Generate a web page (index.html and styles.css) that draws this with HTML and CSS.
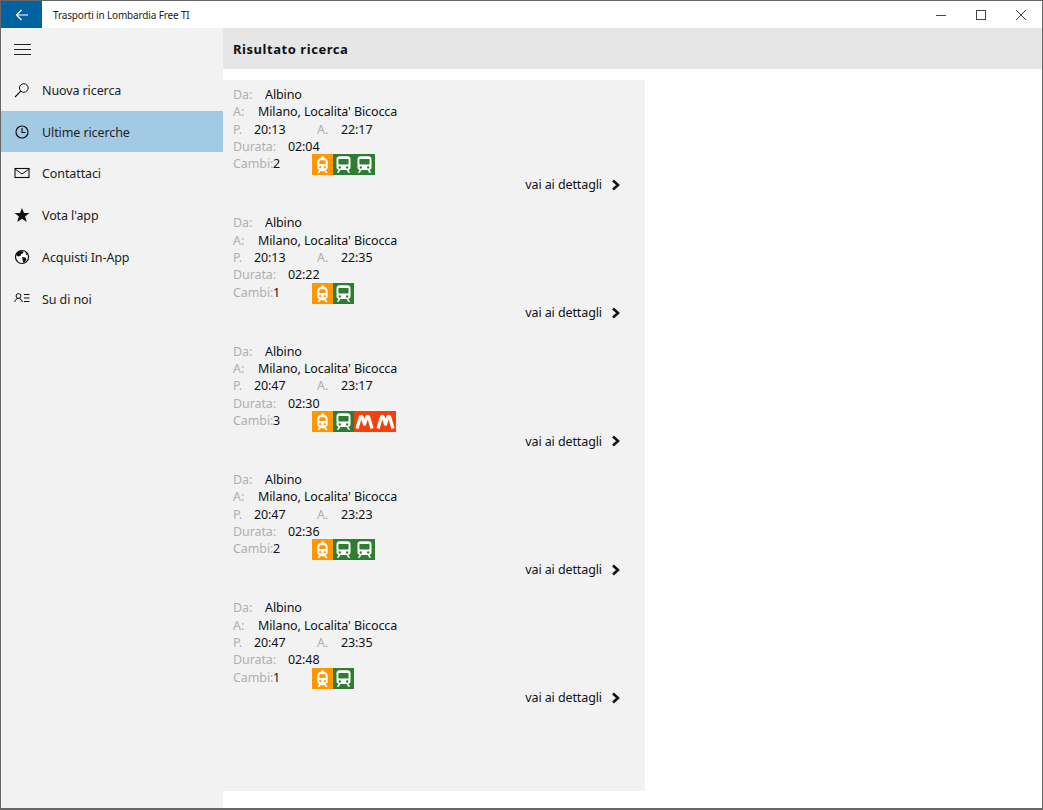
FILE: index.html
```html
<!DOCTYPE html>
<html lang="it">
<head>
<meta charset="utf-8">
<title>Trasporti in Lombardia Free TI</title>
<link rel="stylesheet" href="styles.css">
</head>
<body>
<svg class="defs" width="0" height="0" aria-hidden="true">
  <symbol id="train-a" viewBox="0 0 21 21">
    <path fill="#fff" fill-rule="evenodd" d="M9 2.500h3v1.300c2.200.4 3.700 2 3.700 4.200v5.200c0 1.400-.8 2.400-2 2.700l1.900 3.100h-1.900l-1-1.700H8.300l-1 1.700H5.400l1.900-3.100c-1.200-.3-2-1.300-2-2.700V8c0-2.200 1.500-3.800 3.700-4.200zM8.200 6.200c-.6.400-.9 1-.9 1.800v1.400c0 .4.200.6.600.6h5.200c.4 0 .6-.2.600-.6V8c0-.8-.3-1.400-.9-1.800zM8.200 12a1.100 1.100 0 1 0 0 2.200 1.100 1.100 0 0 0 0-2.200zm4.600 0a1.100 1.100 0 1 0 0 2.200 1.100 1.100 0 0 0 0-2.200z"/>
  </symbol>
  <symbol id="train-b" viewBox="0 0 21 21">
    <path fill="#fff" fill-rule="evenodd" d="M6.500 2.300h8c1.900 0 3 1.100 3 2.900v8.300c0 1.300-.8 2.200-2.100 2.400l1.900 2.800h-2l-1.700-2.600H7.400l-1.700 2.600h-2l1.900-2.800c-1.300-.2-2.100-1.100-2.100-2.400V5.200c0-1.800 1.100-2.900 3-2.900zM6.400 5c-.7 0-1 .3-1 1v3.600c0 .7.300 1 1 1h8.200c.7 0 1-.3 1-1V6c0-.7-.3-1-1-1zM6.800 12.200a1.200 1.200 0 1 0 0 2.400 1.200 1.200 0 0 0 0-2.400zm7.400 0a1.200 1.200 0 1 0 0 2.400 1.200 1.200 0 0 0 0-2.400z"/>
  </symbol>
  <symbol id="metro" viewBox="0 0 21 21">
    <path fill="none" stroke="#fff" stroke-width="3.200" stroke-linejoin="round" d="M3 17.500 6.300 6.200c.3-1 1.700-1 2 0l2.200 7 2.200-7c.3-1 1.700-1 2 0L18 17.500"/>
  </symbol>
</svg>
<div class="window">
  <header class="titlebar">
    <div class="back">
      <svg width="16" height="16" viewBox="0 0 16 16"><path d="M14 8H3M7.500 3 2.500 8l5 5" fill="none" stroke="#fff" stroke-width="1.200"/></svg>
    </div>
    <div class="apptitle">Trasporti in Lombardia Free TI</div>
    <div class="winbtns">
      <svg width="12" height="12" viewBox="0 0 12 12"><path d="M1 6.500h10" stroke="#444" stroke-width="1" fill="none"/></svg>
      <svg width="12" height="12" viewBox="0 0 12 12"><rect x="1.500" y="1.500" width="9" height="9" stroke="#444" stroke-width="1" fill="none"/></svg>
      <svg width="12" height="12" viewBox="0 0 12 12"><path d="M1 1l10 10M11 1 1 11" stroke="#444" stroke-width="1" fill="none"/></svg>
    </div>
  </header>
  <div class="body">
    <nav class="sidebar">
      <div class="burger"><span></span><span></span><span></span></div>
      <a class="navitem">
        <svg class="navicon" viewBox="0 0 16 16"><circle cx="9.800" cy="6" r="4.300" fill="none" stroke="#111" stroke-width="1"/><path d="M6.800 9.200 1 15" stroke="#111" stroke-width="1.100" fill="none"/></svg>
        <span class="navlabel">Nuova ricerca</span>
      </a>
      <a class="navitem active">
        <svg class="navicon" viewBox="0 0 16 16"><circle cx="8" cy="8" r="6" fill="none" stroke="#111" stroke-width="1.200"/><path d="M8 4v4.500h3.500" fill="none" stroke="#111" stroke-width="1.100"/></svg>
        <span class="navlabel">Ultime ricerche</span>
      </a>
      <a class="navitem">
        <svg class="navicon" viewBox="0 0 16 16"><rect x="1" y="3.500" width="14" height="9" fill="none" stroke="#111" stroke-width="1.100"/><path d="M1 4l7 5 7-5" fill="none" stroke="#111" stroke-width="1"/></svg>
        <span class="navlabel">Contattaci</span>
      </a>
      <a class="navitem">
        <svg class="navicon" viewBox="0 0 16 16"><path d="M8 1l2 5h5.500l-4.400 3.400 1.700 5.500L8 11.700l-4.800 3.200 1.700-5.500L.5 6H6z" fill="#111"/></svg>
        <span class="navlabel">Vota l'app</span>
      </a>
      <a class="navitem">
        <svg class="navicon" viewBox="0 0 16 16"><circle cx="8" cy="8" r="6.500" fill="#fff" stroke="#111" stroke-width="1.200"/><path d="M4 2.800 6.500 2l3 .5-.5 2-2 .5-.5 2-2.500.5-2-1.500zM8 8l3.500.5 1 2-2.500 3.500-1-1-.5-2.500zM11.500 3l2 2.500-1.500.5z" fill="#111"/></svg>
        <span class="navlabel">Acquisti In-App</span>
      </a>
      <a class="navitem">
        <svg class="navicon" viewBox="0 0 16 16"><circle cx="4.500" cy="6" r="2.400" fill="none" stroke="#111" stroke-width="1"/><path d="M.8 12c.3-2.300 1.700-3.600 3.700-3.600s3.400 1.300 3.700 3.600M10 4.500h5.500M10 8h5.500M10 11.500h5.500" fill="none" stroke="#111" stroke-width="1"/></svg>
        <span class="navlabel">Su di noi</span>
      </a>
    </nav>
    <main class="content">
      <div class="pagehead">Risultato ricerca</div>
      <section class="results">
        <article class="trip">
          <div class="row"><span class="lab w-da">Da:</span>Albino</div>
          <div class="row"><span class="lab w-a">A:</span>Milano, Localita' Bicocca</div>
          <div class="row"><span class="lab w-p">P.</span><span class="time">20:13</span><span class="lab w-arr">A.</span>22:17</div>
          <div class="row"><span class="lab w-dur">Durata:</span>02:04</div>
          <div class="row change"><span class="lab w-cam">Cambi:</span><span class="num">2</span>
            <span class="icons">
              <svg class="ic orange"><use href="#train-a"/></svg><svg class="ic green"><use href="#train-b"/></svg><svg class="ic green"><use href="#train-b"/></svg>
            </span>
          </div>
          <div class="more"><span>vai ai dettagli</span><svg class="chev" viewBox="0 0 10 12"><path d="M2 1.500 7 6l-5 4.500" fill="none" stroke="#111" stroke-width="2.600"/></svg></div>
        </article>
        <article class="trip">
          <div class="row"><span class="lab w-da">Da:</span>Albino</div>
          <div class="row"><span class="lab w-a">A:</span>Milano, Localita' Bicocca</div>
          <div class="row"><span class="lab w-p">P.</span><span class="time">20:13</span><span class="lab w-arr">A.</span>22:35</div>
          <div class="row"><span class="lab w-dur">Durata:</span>02:22</div>
          <div class="row change"><span class="lab w-cam">Cambi:</span><span class="num">1</span>
            <span class="icons">
              <svg class="ic orange"><use href="#train-a"/></svg><svg class="ic green"><use href="#train-b"/></svg>
            </span>
          </div>
          <div class="more"><span>vai ai dettagli</span><svg class="chev" viewBox="0 0 10 12"><path d="M2 1.500 7 6l-5 4.500" fill="none" stroke="#111" stroke-width="2.600"/></svg></div>
        </article>
        <article class="trip">
          <div class="row"><span class="lab w-da">Da:</span>Albino</div>
          <div class="row"><span class="lab w-a">A:</span>Milano, Localita' Bicocca</div>
          <div class="row"><span class="lab w-p">P.</span><span class="time">20:47</span><span class="lab w-arr">A.</span>23:17</div>
          <div class="row"><span class="lab w-dur">Durata:</span>02:30</div>
          <div class="row change"><span class="lab w-cam">Cambi:</span><span class="num">3</span>
            <span class="icons">
              <svg class="ic orange"><use href="#train-a"/></svg><svg class="ic green"><use href="#train-b"/></svg><svg class="ic red"><use href="#metro"/></svg><svg class="ic red"><use href="#metro"/></svg>
            </span>
          </div>
          <div class="more"><span>vai ai dettagli</span><svg class="chev" viewBox="0 0 10 12"><path d="M2 1.500 7 6l-5 4.500" fill="none" stroke="#111" stroke-width="2.600"/></svg></div>
        </article>
        <article class="trip">
          <div class="row"><span class="lab w-da">Da:</span>Albino</div>
          <div class="row"><span class="lab w-a">A:</span>Milano, Localita' Bicocca</div>
          <div class="row"><span class="lab w-p">P.</span><span class="time">20:47</span><span class="lab w-arr">A.</span>23:23</div>
          <div class="row"><span class="lab w-dur">Durata:</span>02:36</div>
          <div class="row change"><span class="lab w-cam">Cambi:</span><span class="num">2</span>
            <span class="icons">
              <svg class="ic orange"><use href="#train-a"/></svg><svg class="ic green"><use href="#train-b"/></svg><svg class="ic green"><use href="#train-b"/></svg>
            </span>
          </div>
          <div class="more"><span>vai ai dettagli</span><svg class="chev" viewBox="0 0 10 12"><path d="M2 1.500 7 6l-5 4.500" fill="none" stroke="#111" stroke-width="2.600"/></svg></div>
        </article>
        <article class="trip">
          <div class="row"><span class="lab w-da">Da:</span>Albino</div>
          <div class="row"><span class="lab w-a">A:</span>Milano, Localita' Bicocca</div>
          <div class="row"><span class="lab w-p">P.</span><span class="time">20:47</span><span class="lab w-arr">A.</span>23:35</div>
          <div class="row"><span class="lab w-dur">Durata:</span>02:48</div>
          <div class="row change"><span class="lab w-cam">Cambi:</span><span class="num">1</span>
            <span class="icons">
              <svg class="ic orange"><use href="#train-a"/></svg><svg class="ic green"><use href="#train-b"/></svg>
            </span>
          </div>
          <div class="more"><span>vai ai dettagli</span><svg class="chev" viewBox="0 0 10 12"><path d="M2 1.500 7 6l-5 4.500" fill="none" stroke="#111" stroke-width="2.600"/></svg></div>
        </article>
      </section>
    </main>
  </div>
</div>
</body>
</html>
```
FILE: styles.css
```css
* { box-sizing: border-box; }
html, body { margin: 0; padding: 0; background: #fff; }
body {
  width: 1043px;
  height: 810px;
  overflow: hidden;
  font-family: "Noto Sans", "Open Sans", sans-serif;
  font-size: 12.500px;
  letter-spacing: -.1px;
  color: #111;
}
.defs { display: block; height: 0; }
.window {
  width: 1043px;
  height: 810px;
  border: 1px solid #666;
  border-bottom-width: 2px;
  display: flex;
  flex-direction: column;
  overflow: hidden;
}
.titlebar { height: 27px; flex: none; display: flex; align-items: center; background: #fff; }
.back {
  width: 41px; height: 27px; background: #00629f;
  display: flex; align-items: center; justify-content: center;
}
.apptitle { margin-left: 11px; font-size: 10px; letter-spacing: -.15px; color: #222; flex: 1; }
.winbtns { display: flex; gap: 28px; align-items: center; margin-right: 15px; }
.winbtns svg { display: block; }
.body { flex: 1; display: flex; min-height: 0; }
.sidebar { width: 222px; flex: none; background: #f2f2f2; }
.burger {
  height: 41px; padding: 16px 0 0 13px;
  display: flex; flex-direction: column; gap: 4px;
}
.burger span { display: block; width: 17px; height: 1px; background: #222; }
.navitem {
  display: flex; align-items: center; height: 41.700px;
  padding-left: 13px; gap: 12px; color: #222;
}
.navitem.active { background: #a3cae3; }
.navicon { width: 16px; height: 16px; flex: none; display: block; }
.navlabel { padding-top: 1.500px; }
.content { flex: 1; min-width: 0; display: flex; flex-direction: column; }
.pagehead {
  height: 41px; flex: none; background: #e6e6e6;
  display: flex; align-items: center; padding-left: 10px;
  font-size: 13px; font-weight: 700; letter-spacing: .55px; color: #111;
}
.results {
  margin-top: 11px;
  width: 422px; height: 711px;
  background: #f2f2f2;
  padding: 6px 0 0 10px;
}
.trip { height: 128.300px; padding-right: 24px; }
.row { height: 17.330px; line-height: 17.330px; white-space: nowrap; color: #111; display: flex; }
.lab { color: #b0b0b0; flex: none; }
.w-da { width: 32px; }
.w-a { width: 25px; }
.w-p { width: 21px; }
.time { width: 63px; flex: none; }
.w-arr { width: 24px; }
.w-dur { width: 55px; }
.w-cam { width: 40px; }
.num { width: 39px; flex: none; }
.icons { display: flex; margin-top: -1px; height: 21px; }
.ic { width: 21px; height: 21px; display: block; flex: none; }
.orange { background: #ff9800; }
.green { background: #2e7d32; }
.red { background: #f4400b; }
.more {
  margin-top: 3.500px; height: 17px; line-height: 17px;
  display: flex; justify-content: flex-end; align-items: center; gap: 9px;
}
.chev { width: 10px; height: 12px; display: block; }
```
